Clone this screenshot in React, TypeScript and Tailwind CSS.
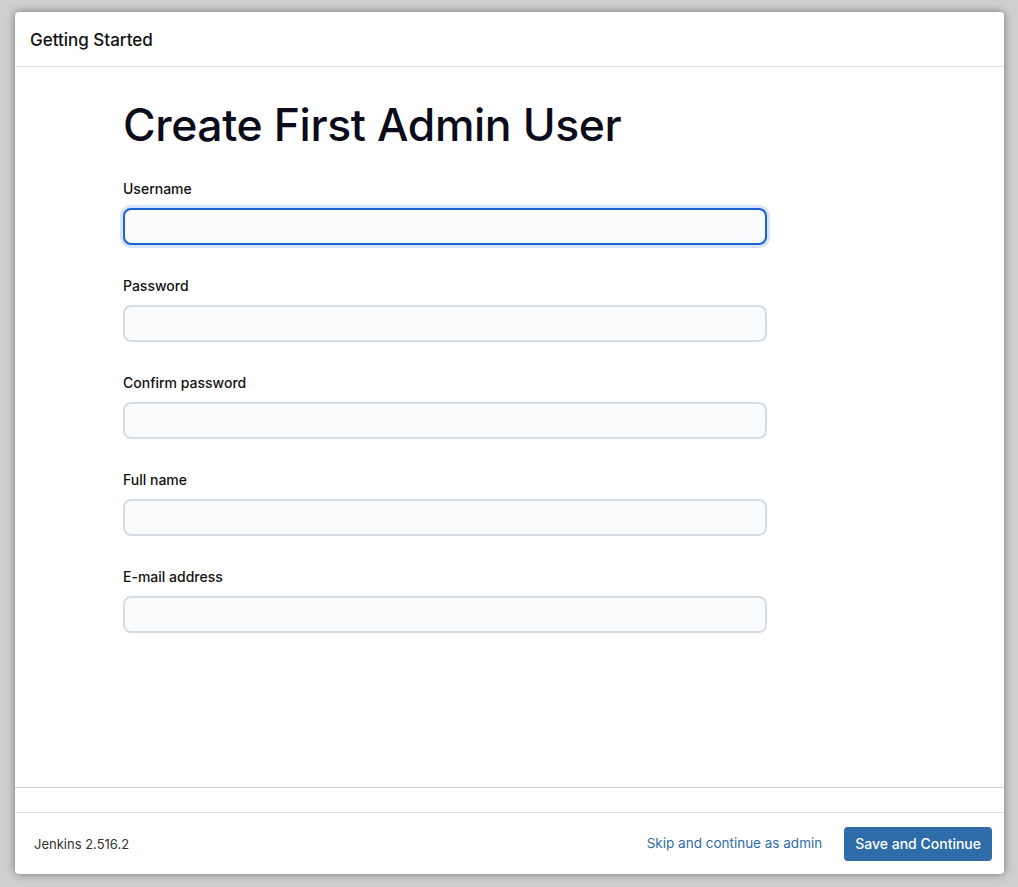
import { useState } from 'react';

const fields = [
  { id: 'username', label: 'Username', type: 'text' },
  { id: 'password', label: 'Password', type: 'password' },
  { id: 'confirm', label: 'Confirm password', type: 'password' },
  { id: 'fullname', label: 'Full name', type: 'text' },
  { id: 'email', label: 'E-mail address', type: 'email' },
];

function App() {
  const [values, setValues] = useState<Record<string, string>>({});

  return (
    <div className="h-screen w-full bg-[#cfcfcf] pt-[12px] pl-[15px] pr-[14px] pb-[13px] font-['Inter',sans-serif]">
      <div className="h-full flex flex-col bg-white rounded-[4px] shadow-[0_0_8px_rgba(0,0,0,0.45)] overflow-hidden">
        <header className="h-[55px] shrink-0 border-b border-[#e3e3e3] px-[15px] pt-[3px] flex items-center">
          <h4 className="text-[17px] font-medium text-[#111] leading-none">Getting Started</h4>
        </header>

        <main className="flex-1 pl-[108px] pt-[36px]">
          <h1 className="text-[44.5px] font-medium leading-none tracking-[-0.4px] text-[#0b0b1a] mb-[31px]">Create First Admin User</h1>
          <div className="flex flex-col gap-[31px] w-[644px]">
            {fields.map((f, i) => (
              <div key={f.id} className="flex flex-col">
                <label htmlFor={f.id} className="text-[14px] leading-[20px] text-[#111] font-medium mb-[9px]">{f.label}</label>
                <input
                  id={f.id}
                  type={f.type}
                  autoFocus={i === 0}
                  value={values[f.id] || ''}
                  onChange={(e) => setValues({ ...values, [f.id]: e.target.value })}
                  className={`h-[37px] w-full rounded-[8px] border-2 bg-[#f9fbfd] px-[10px] text-[14px] outline-none ${i === 0 ? 'border-[#1a62d0] ring-[3px] ring-[#d6e5fb]' : 'border-[#d6dce4]'}`}
                />
              </div>
            ))}
          </div>
        </main>

        <div className="h-[25px] shrink-0 border-t border-[#cfcfcf]" />
        <footer className="h-[62px] shrink-0 border-t border-[#e3e3e3] flex items-center justify-between pl-[19px] pr-[12px]">
          <span className="text-[13px] text-[#333] pt-[2px]">Jenkins 2.516.2</span>
          <div className="flex items-center gap-[22px]">
            <a href="#" className="text-[13.5px] text-[#2f6ba8]">Skip and continue as admin</a>
            <button className="h-[34px] px-[11px] rounded-[4px] bg-[#2e6ca9] text-white text-[14px] font-medium">Save and Continue</button>
          </div>
        </footer>
      </div>
    </div>
  );
}

export default App;
